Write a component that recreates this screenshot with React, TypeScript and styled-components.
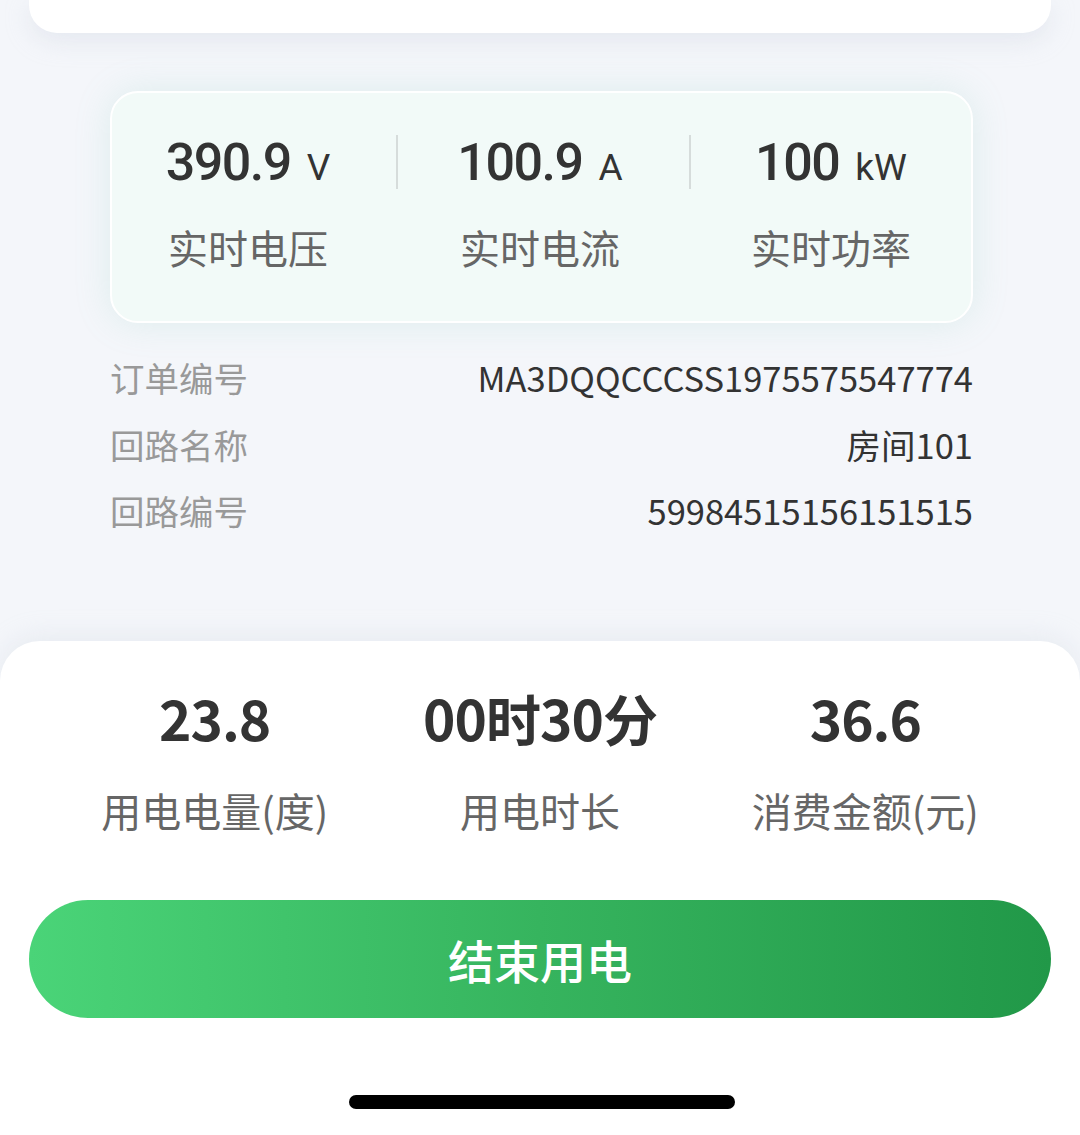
import React from "react";
import styled, { createGlobalStyle } from "styled-components";

const Global = createGlobalStyle`
  html, body { margin: 0; padding: 0; }
  body {
    background: #f4f6fa;
    font-family: "Noto Sans CJK SC", "Noto Sans", sans-serif;
    color: #333;
  }
`;

const Page = styled.div`
  width: 1080px;
  height: 1135px;
  display: flex;
  flex-direction: column;
  overflow: hidden;
  background: #f4f6fa;
`;

const TopCard = styled.div`
  margin: 0 29px;
  height: 33px;
  background: #fff;
  border-radius: 0 0 28px 28px;
  box-shadow: 0 8px 24px rgba(200, 206, 220, 0.35);
`;

const StatsCard = styled.div`
  margin: 58px 0 0 110px;
  width: 863px;
  height: 232px;
  box-sizing: border-box;
  padding-top: 42px;
  display: grid;
  grid-template-columns: 284px 2px 291px 2px 280px;
  align-items: start;
  background: #f2faf8;
  border: 2px solid #ffffff;
  border-radius: 28px;
  box-shadow: 0 0 36px rgba(120, 200, 180, 0.18);
`;

const StatCol = styled.div<{ $shift: number }>`
  display: flex;
  flex-direction: column;
  align-items: center;
  padding-right: ${(p) => p.$shift}px;
`;

const ValueRow = styled.div`
  display: flex;
  align-items: baseline;
  gap: 16px;
  height: 54px;
  padding-top: 2px;
  box-sizing: border-box;
`;

const Value = styled.span`
  font-family: "Roboto", "Liberation Sans", sans-serif;
  font-weight: 500;
  font-size: 52px;
  line-height: 52px;
  letter-spacing: -1.5px;
  color: #333;
`;

const Unit = styled.span`
  font-family: "Roboto", "Liberation Sans", sans-serif;
  font-weight: 400;
  font-size: 37px;
  line-height: 52px;
  color: #333;
`;

const StatLabel = styled.div`
  margin-top: 38px;
  font-size: 40px;
  line-height: 40px;
  color: #666;
`;

const Divider = styled.div`
  width: 2px;
  height: 54px;
  background: #d6dcdb;
`;

const InfoList = styled.div`
  margin: 21px 107px 0 110px;
  display: flex;
  flex-direction: column;
`;

const InfoRow = styled.div`
  height: 66.5px;
  display: flex;
  align-items: center;
  justify-content: space-between;
  font-size: 34.5px;
`;

const InfoLabel = styled.span`
  color: #999;
`;

const InfoValue = styled.span`
  color: #333;
`;

const Sheet = styled.div`
  margin-top: 97px;
  flex: 1;
  background: #fff;
  border-radius: 40px 40px 0 0;
  box-shadow: 0 -6px 24px rgba(200, 206, 220, 0.25);
  display: flex;
  flex-direction: column;
  padding-top: 48px;
`;

const SummaryRow = styled.div`
  display: flex;
  padding: 0 52px;
`;

const SummaryCol = styled.div`
  flex: 1;
  display: flex;
  flex-direction: column;
  align-items: center;
`;

const SummaryValue = styled.div`
  font-size: 55px;
  line-height: 56px;
  font-weight: 700;
  color: #333;
  letter-spacing: -1px;
`;

const SummaryLabel = styled.div`
  margin-top: 45px;
  font-size: 40px;
  line-height: 40px;
  color: #666;
`;

const EndButton = styled.button`
  margin: 70px 29px 0;
  height: 118px;
  border: none;
  border-radius: 59px;
  background: linear-gradient(90deg, #4ad478 0%, #36b45e 50%, #219848 100%);
  color: #fff;
  font-family: "Noto Sans CJK SC", sans-serif;
  font-size: 46px;
  font-weight: 500;
  cursor: pointer;
`;

const HomeIndicator = styled.div`
  align-self: center;
  margin: 77px 0 0 4px;
  width: 386px;
  height: 14px;
  border-radius: 7px;
  background: #000;
`;

const stats = [
  { value: "390.9", unit: "V", label: "实时电压", shift: 12 },
  { value: "100.9", unit: "A", label: "实时电流", shift: 7 },
  { value: "100", unit: "kW", label: "实时功率", shift: 0 },
];

const info = [
  { label: "订单编号", value: "MA3DQQCCCSS1975575547774" },
  { label: "回路名称", value: "房间101" },
  { label: "回路编号", value: "59984515156151515" },
];

const summary = [
  { value: "23.8", label: "用电电量(度)" },
  { value: "00时30分", label: "用电时长" },
  { value: "36.6", label: "消费金额(元)" },
];

export default function App() {
  return (
    <>
      <Global />
      <Page>
        <TopCard />
        <StatsCard>
          {stats.map((s, i) => (
            <React.Fragment key={s.label}>
              {i > 0 && <Divider />}
              <StatCol $shift={s.shift}>
                <ValueRow>
                  <Value>{s.value}</Value>
                  <Unit>{s.unit}</Unit>
                </ValueRow>
                <StatLabel>{s.label}</StatLabel>
              </StatCol>
            </React.Fragment>
          ))}
        </StatsCard>
        <InfoList>
          {info.map((r) => (
            <InfoRow key={r.label}>
              <InfoLabel>{r.label}</InfoLabel>
              <InfoValue>{r.value}</InfoValue>
            </InfoRow>
          ))}
        </InfoList>
        <Sheet>
          <SummaryRow>
            {summary.map((s) => (
              <SummaryCol key={s.label}>
                <SummaryValue>{s.value}</SummaryValue>
                <SummaryLabel>{s.label}</SummaryLabel>
              </SummaryCol>
            ))}
          </SummaryRow>
          <EndButton>结束用电</EndButton>
          <HomeIndicator />
        </Sheet>
      </Page>
    </>
  );
}
